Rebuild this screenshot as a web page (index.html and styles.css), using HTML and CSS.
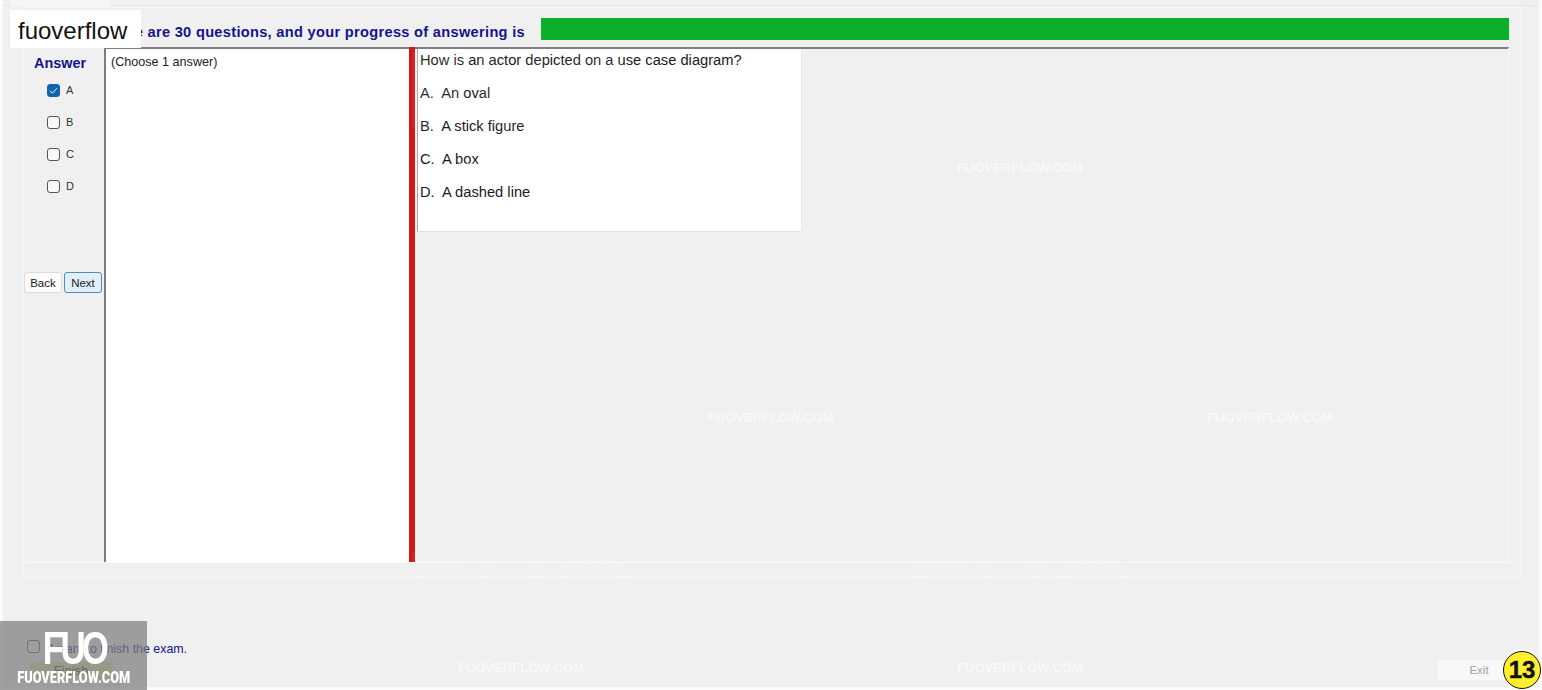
FILE: index.html
```html
<!DOCTYPE html>
<html lang="en">
<head>
    <meta charset="UTF-8">
    <meta name="viewport" content="width=device-width, initial-scale=1.0">
    <title>Exam</title>
    <link rel="stylesheet" href="styles.css">
</head>
<body>
    <div class="window">
        <div class="tab-strip">
            <div class="tab"></div>
        </div>
        <div class="group">
            <div class="progress-row">
                <span class="progress-text">There are 30 questions, and your progress of answering is</span>
                <div class="progress-bar"></div>
            </div>
            <div class="exam-body">
                <div class="answer-col">
                    <div class="answer-title">Answer</div>
                    <label class="option"><span class="check checked"><svg viewBox="0 0 13 13" width="13" height="13"><path d="M3 6.8l2.4 2.4L10 4.2" fill="none" stroke="#fff" stroke-width="1"/></svg></span>A</label>
                    <label class="option"><span class="check"></span>B</label>
                    <label class="option"><span class="check"></span>C</label>
                    <label class="option"><span class="check"></span>D</label>
                    <div class="nav-buttons">
                        <button class="btn">Back</button>
                        <button class="btn btn-active">Next</button>
                    </div>
                </div>
                <div class="choose-pane">(Choose 1 answer)</div>
                <div class="splitter"></div>
                <div class="question-pane">
                    <div class="question-box">
                        <p>How is an actor depicted on a use case diagram?</p>
                        <p>A.&nbsp; An oval</p>
                        <p>B.&nbsp; A stick figure</p>
                        <p>C.&nbsp; A box</p>
                        <p>D.&nbsp; A dashed line</p>
                    </div>
                </div>
            </div>
        </div>
        <div class="footer">
            <div class="finish-col">
                <label class="finish-check"><span class="check check-dark"></span>I want to finish the exam.</label>
                <button class="btn-finish">Finish</button>
            </div>
            <button class="btn-exit">Exit</button>
        </div>
    </div>

    <!-- watermark over the whole page -->
    <div class="wm wm-a"><span class="wm-big">FUO</span><span class="wm-small">FUOVERFLOW.COM</span></div>
    <div class="wm wm-b"><span class="wm-big">FUO</span><span class="wm-small">FUOVERFLOW.COM</span></div>
    <div class="wm wm-c"><span class="wm-big">FUO</span><span class="wm-small">FUOVERFLOW.COM</span></div>
    <div class="wm wm-d"><span class="wm-big">FUO</span><span class="wm-small">FUOVERFLOW.COM</span></div>
    <div class="wm wm-e"><span class="wm-big">FUO</span><span class="wm-small">FUOVERFLOW.COM</span></div>
    <div class="wm wm-f"><span class="wm-big">FUO</span><span class="wm-small">FUOVERFLOW.COM</span></div>
    <div class="wm wm-g"><span class="wm-big">FUO</span><span class="wm-small">FUOVERFLOW.COM</span></div>

    <div class="brand-label">fuoverflow</div>
    <div class="brand-badge">
        <span class="badge-logo">FUO</span>
        <span class="badge-site">FUOVERFLOW.COM</span>
    </div>
    <div class="page-number">13</div>
</body>
</html>
```

FILE: styles.css
```css
* {
    box-sizing: border-box;
}

html, body {
    margin: 0;
    padding: 0;
    height: 690px;
    overflow: hidden;
}

body {
    position: relative;
    background-color: #fbfbfb;
    font-family: 'Liberation Sans', Arial, sans-serif;
    color: #1a1a1a;
}

.window {
    display: flex;
    flex-direction: column;
    width: 1536px;
    height: 687px;
    margin-left: 3px;
    background-color: #f0f0f0;
}

.tab-strip {
    height: 6px;
    border-bottom: 1px solid #e6e6e6;
}

.tab {
    width: 100px;
    height: 6px;
    margin-left: 8px;
    background-color: #f6f6f6;
}

.group {
    display: flex;
    flex-direction: column;
    width: 1500px;
    height: 571px;
    margin: 1px 0 0 19px;
    padding: 9px 12px 0 2px;
    border: 1px solid #f7f7f7;
}

.progress-row {
    display: flex;
    align-items: center;
    justify-content: flex-end;
    gap: 16px;
    height: 23px;
    margin-bottom: 7px;
}

.progress-text {
    margin-top: 6px;
    font-size: 14.6px;
    font-weight: bold;
    letter-spacing: 0.31px;
    color: #14148c;
    white-space: nowrap;
}

.progress-bar {
    width: 968px;
    height: 22px;
    background-color: #0bb02a;
}

.exam-body {
    display: flex;
    height: 516px;
    border-top: 2px solid #808080;
    border-bottom: 1px solid #fafafa;
    border-right: 1px solid #fafafa;
}

.answer-col {
    display: flex;
    flex-direction: column;
    width: 79px;
    margin-top: -2px;
    background-color: #f0f0f0;
}

.answer-title {
    margin: 8px 0 3px 9px;
    font-size: 14.4px;
    font-weight: bold;
    color: #14148c;
}

.option {
    display: flex;
    align-items: center;
    gap: 6px;
    height: 32px;
    padding-left: 22px;
    font-size: 11px;
    color: #333333;
}

.check {
    display: inline-block;
    width: 13px;
    height: 13px;
    background-color: #f8f8f8;
    border: 1px solid #555555;
    border-radius: 3px;
}

.check.checked {
    background-color: #0f64ac;
    border-color: #0f64ac;
}

.check svg {
    display: block;
    margin: -1px;
}

.nav-buttons {
    display: flex;
    gap: 2px;
    margin: 70px 0 0 -1px;
}

.btn {
    width: 38px;
    height: 21px;
    padding: 0;
    background-color: #fbfbfb;
    border: 1px solid #dcdcdc;
    border-radius: 3px;
    font-family: inherit;
    font-size: 11.5px;
    color: #222222;
}

.btn-active {
    background-color: #e1f0f8;
    border: 1px solid #4f8fb3;
}

.choose-pane {
    width: 305px;
    padding: 6px 5px;
    background-color: #ffffff;
    border-left: 2px solid #7d7d7d;
    font-size: 12.6px;
    color: #222222;
}

.splitter {
    width: 6px;
    background-color: #d01818;
    margin-top: -2px;
}

.question-pane {
    flex: 1;
    padding-left: 2px;
}

.question-box {
    width: 385px;
    height: 183px;
    padding: 3px 2px;
    background-color: #ffffff;
    border-left: 1px solid #a8a8a8;
    border-bottom: 1px solid #e2e2e2;
    border-right: 1px solid #e8e8e8;
    font-size: 14.7px;
    color: #1a1a1a;
}

.question-box p {
    margin: 0 0 16px;
    line-height: 17px;
}

.footer {
    display: flex;
    flex: 1;
    justify-content: space-between;
    align-items: flex-end;
    padding: 0 19px 7px 24px;
}

.finish-col {
    display: flex;
    flex-direction: column;
    margin-bottom: 1px;
}

.finish-check {
    display: flex;
    align-items: center;
    gap: 10px;
    font-size: 12.4px;
    color: #14148c;
}

.finish-check .check {
    margin-top: -5px;
}

.check-dark {
    background-color: transparent;
}

.btn-finish {
    width: 82px;
    height: 17px;
    margin: 6px 0 0 3px;
    padding: 0;
    background-color: #d8e6a0;
    border: none;
    font-family: inherit;
    font-size: 13px;
    color: #333333;
}

.btn-exit {
    width: 82px;
    height: 20px;
    padding: 0;
    background-color: #f8f8f8;
    border: none;
    font-family: inherit;
    font-size: 11.5px;
    color: #a0a0a0;
}

.wm {
    position: absolute;
    display: flex;
    flex-direction: column;
    align-items: center;
    width: 230px;
    pointer-events: none;
}

.wm-big {
    height: 110px;
    font-size: 110px;
    line-height: 110px;
    font-weight: bold;
    color: rgba(255, 255, 255, 0.07);
}

.wm-small {
    margin-top: 15px;
    font-size: 13px;
    font-weight: bold;
    color: rgba(255, 255, 255, 0.55);
    filter: blur(0.5px);
}

.wm-a { left: 406px; top: 35px; }
.wm-b { left: 905px; top: 35px; }
.wm-c { left: 155px; top: 285px; }
.wm-d { left: 656px; top: 285px; }
.wm-e { left: 1155px; top: 285px; }
.wm-f { left: 406px; top: 535px; }
.wm-g { left: 905px; top: 535px; }

.brand-label {
    position: absolute;
    left: 10px;
    top: 10px;
    width: 131px;
    height: 38px;
    padding-left: 8px;
    background-color: #ffffff;
    font-size: 24px;
    line-height: 42px;
    color: #111111;
}

.brand-badge {
    position: absolute;
    left: 0;
    top: 621px;
    display: flex;
    flex-direction: column;
    align-items: center;
    width: 147px;
    height: 69px;
    background-color: rgba(125, 125, 125, 0.72);
    color: #ffffff;
    font-weight: bold;
}

.badge-logo {
    height: 42px;
    margin: 5px 0 0 1px;
    font-size: 46px;
    line-height: 44px;
    letter-spacing: -5px;
    transform: scaleX(0.76);
}

.badge-site {
    font-family: 'Roboto', sans-serif;
    font-size: 16px;
    font-weight: 900;
    transform: scaleX(0.8);
    white-space: nowrap;
}

.page-number {
    position: absolute;
    left: 1503px;
    top: 651px;
    width: 38px;
    height: 38px;
    background-color: #ffef2e;
    border: 1.5px solid #111111;
    border-radius: 50%;
    box-shadow: 0 0 0 2px #f8f8f8;
    font-size: 24px;
    font-weight: bold;
    line-height: 36px;
    text-align: center;
    color: #111111;
    -webkit-text-stroke: 0.4px #111111;
}
```
